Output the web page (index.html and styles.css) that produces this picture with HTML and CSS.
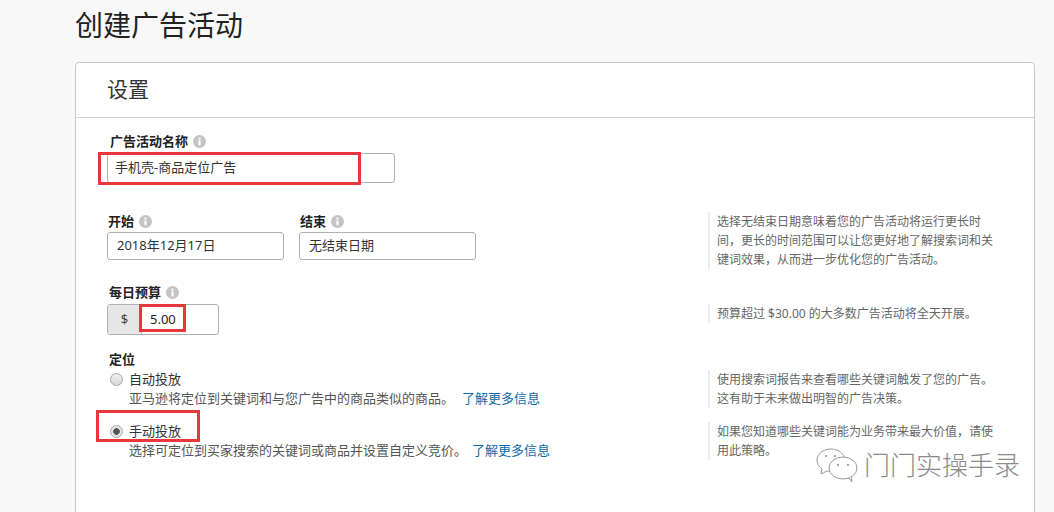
FILE: index.html
```html
<!DOCTYPE html>
<html lang="zh-CN">
<head>
<meta charset="utf-8">
<title>创建广告活动</title>
<link rel="stylesheet" href="styles.css">
</head>
<body>
<h1 class="page-title">创建广告活动</h1>
<section class="card">
  <h2 class="card-title">设置</h2>
  <div class="card-body">
    <div class="form">
      <div class="label label-name">广告活动名称 <svg class="info" viewBox="0 0 12 12"><circle cx="6" cy="6" r="6"/><rect x="5" y="5" width="2" height="4.6" fill="#fff"/><rect x="5" y="2.4" width="2" height="1.8" fill="#fff"/></svg></div>
      <div class="input input-name">手机壳-商品定位广告<span class="mark mark-name"></span></div>

      <div class="dates">
        <div class="date">
          <div class="label">开始 <svg class="info" viewBox="0 0 12 12"><circle cx="6" cy="6" r="6"/><rect x="5" y="5" width="2" height="4.6" fill="#fff"/><rect x="5" y="2.4" width="2" height="1.8" fill="#fff"/></svg></div>
          <div class="input input-date">2018年12月17日</div>
        </div>
        <div class="date">
          <div class="label">结束 <svg class="info" viewBox="0 0 12 12"><circle cx="6" cy="6" r="6"/><rect x="5" y="5" width="2" height="4.6" fill="#fff"/><rect x="5" y="2.4" width="2" height="1.8" fill="#fff"/></svg></div>
          <div class="input input-date">无结束日期</div>
        </div>
      </div>

      <div class="label label-budget">每日预算 <svg class="info" viewBox="0 0 12 12"><circle cx="6" cy="6" r="6"/><rect x="5" y="5" width="2" height="4.6" fill="#fff"/><rect x="5" y="2.4" width="2" height="1.8" fill="#fff"/></svg></div>
      <div class="money">
        <span class="addon">$</span>
        <span class="amount">5.00</span>
        <span class="mark mark-amount"></span>
      </div>

      <div class="label label-target">定位</div>
      <div class="option option-auto">
        <span class="radio"></span>
        <div>
          <div class="option-name">自动投放</div>
          <div class="option-desc">亚马逊将定位到关键词和与您广告中的商品类似的商品。<a class="more more-auto">了解更多信息</a></div>
        </div>
      </div>
      <div class="option option-manual">
        <span class="radio radio-on"></span>
        <div>
          <div class="option-name">手动投放</div>
          <div class="option-desc">选择可定位到买家搜索的关键词或商品并设置自定义竞价。<a class="more">了解更多信息</a></div>
        </div>
        <span class="mark mark-manual"></span>
      </div>
    </div>

    <aside class="tips">
      <p class="tip tip-dates">选择无结束日期意味着您的广告活动将运行更长时间，更长的时间范围可以让您更好地了解搜索词和关键词效果，从而进一步优化您的广告活动。</p>
      <p class="tip tip-budget">预算超过 $30.00 的大多数广告活动将全天开展。</p>
      <p class="tip tip-auto">使用搜索词报告来查看哪些关键词触发了您的广告。这有助于未来做出明智的广告决策。</p>
      <p class="tip tip-manual">如果您知道哪些关键词能为业务带来最大价值，请使用此策略。</p>
    </aside>
  </div>
</section>
<div class="watermark">
  <svg class="wechat" viewBox="0 0 42 36" fill="#fff" stroke="#9a9a9a" stroke-width="1">
    <path d="M15 2C7 2 1 7 1 13c0 4 2 7 5 9l-1 5 6-3c1 .3 2 .4 3 .4"/>
    <path d="M15 2c7 0 12 4 14 9"/>
    <ellipse cx="27" cy="21" rx="14" ry="11"/>
    <path d="M33 31l3 4-1-6" />
    <circle cx="10" cy="9" r="1" fill="#888" stroke="none"/>
    <circle cx="19" cy="9" r="1" fill="#888" stroke="none"/>
    <circle cx="22" cy="18" r="1" fill="#888" stroke="none"/>
    <circle cx="32" cy="18" r="1" fill="#888" stroke="none"/>
  </svg>
  <span class="wm-text">门门实操手录</span>
</div>
</body>
</html>
```
FILE: styles.css
```css
* { box-sizing: border-box; }
html, body { margin: 0; height: 512px; overflow: hidden; }
body {
  background: #f8f8f8;
  color: #333;
  font-family: "Noto Sans", "Noto Sans CJK SC", sans-serif;
  font-size: 13px;
  padding: 0 19px 0 75px;
  position: relative;
}
.page-title {
  margin: 0;
  height: 62px;
  padding-top: 7px;
  font-size: 28px;
  line-height: 36px;
  font-weight: 400;
  color: #222;
}
.card {
  height: 470px;
  background: #fff;
  border: 1px solid #c9c9c9;
  border-radius: 4px;
}
.card-title {
  margin: 0;
  height: 55px;
  padding: 11px 0 0 31px;
  font-size: 21px;
  line-height: 30px;
  font-weight: 400;
  color: #333;
  border-bottom: 1px solid #cfcfcf;
}
.card-body { display: flex; }
.form { width: 632px; padding: 14px 0 0 31px; }
.label {
  font-size: 13px;
  line-height: 18px;
  font-weight: 700;
  color: #222;
  display: flex;
  align-items: center;
  gap: 4px;
  padding-left: 1px;
}
.label-name { padding-left: 3px; }
.info { width: 13px; height: 13px; fill: #c4c4c4; margin-left: 1px; }
.input {
  background: #fff;
  border: 1px solid #adb1b8;
  border-radius: 3px;
  font-size: 13px;
  color: #333;
  position: relative;
}
.input-name { width: 288px; height: 30px; margin-top: 3px; line-height: 27px; padding-left: 7px; }
.mark { position: absolute; border: 3px solid #e8383d; }
.mark-name { left: -10px; top: -2px; width: 263px; height: 33px; }
.dates { display: flex; gap: 15px; margin-top: 29px; }
.date { width: 177px; }
.input-date { height: 28px; margin-top: 2px; line-height: 25px; padding-left: 9px; }
.label-budget { margin-top: 23px; padding-left: 2px; }
.money {
  position: relative;
  display: flex;
  width: 112px;
  height: 31px;
  margin-top: 3px;
  background: #fff;
  border: 1px solid #adb1b8;
  border-radius: 3px;
}
.addon {
  width: 34px;
  background: #e6e6e6;
  border-right: 1px solid #adb1b8;
  text-align: center;
  line-height: 29px;
  color: #444;
  border-radius: 2px 0 0 2px;
}
.amount { padding-left: 8px; line-height: 29px; color: #222; }
.mark-amount { left: 31px; top: -1px; width: 47px; height: 28px; }
.label-target { margin-top: 15px; padding-left: 2px; }
.option { display: flex; gap: 6px; padding-left: 3px; position: relative; }
.option-auto { margin-top: 2px; }
.option-manual { margin-top: 14px; }
.radio {
  width: 13px;
  height: 13px;
  margin-top: 3px;
  flex: none;
  border: 1px solid #a8a8a8;
  border-radius: 50%;
  background: linear-gradient(#f0f0f0, #d8d8d8);
}
.radio-on { background: radial-gradient(circle, #555 0 3px, #e2e2e2 3.6px); }
.option-name { line-height: 18px; color: #333; }
.option-desc { line-height: 20px; color: #555; white-space: nowrap; }
.more { color: #0f6ba8; margin-left: 5px; }
.more-auto { margin-left: 8px; }
.mark-manual { left: -11px; top: -12px; width: 104px; height: 32px; }
.tips { width: 288px; }
.tip {
  margin: 0;
  border-left: 2px solid #ececec;
  padding-left: 7px;
  font-size: 12px;
  line-height: 19px;
  color: #666;
}
.tip-dates { margin-top: 94px; }
.tip-budget { margin-top: 35px; }
.tip-auto { margin-top: 47px; }
.tip-manual { margin-top: 14px; }
.watermark {
  position: absolute;
  left: 816px;
  top: 447px;
  display: flex;
  align-items: center;
  gap: 6px;
}
.wechat { width: 42px; height: 36px; }
.wm-text {
  font-size: 26px;
  line-height: 36px;
  color: #8a8a8a;
  font-weight: 300;
  white-space: nowrap;
}
```
